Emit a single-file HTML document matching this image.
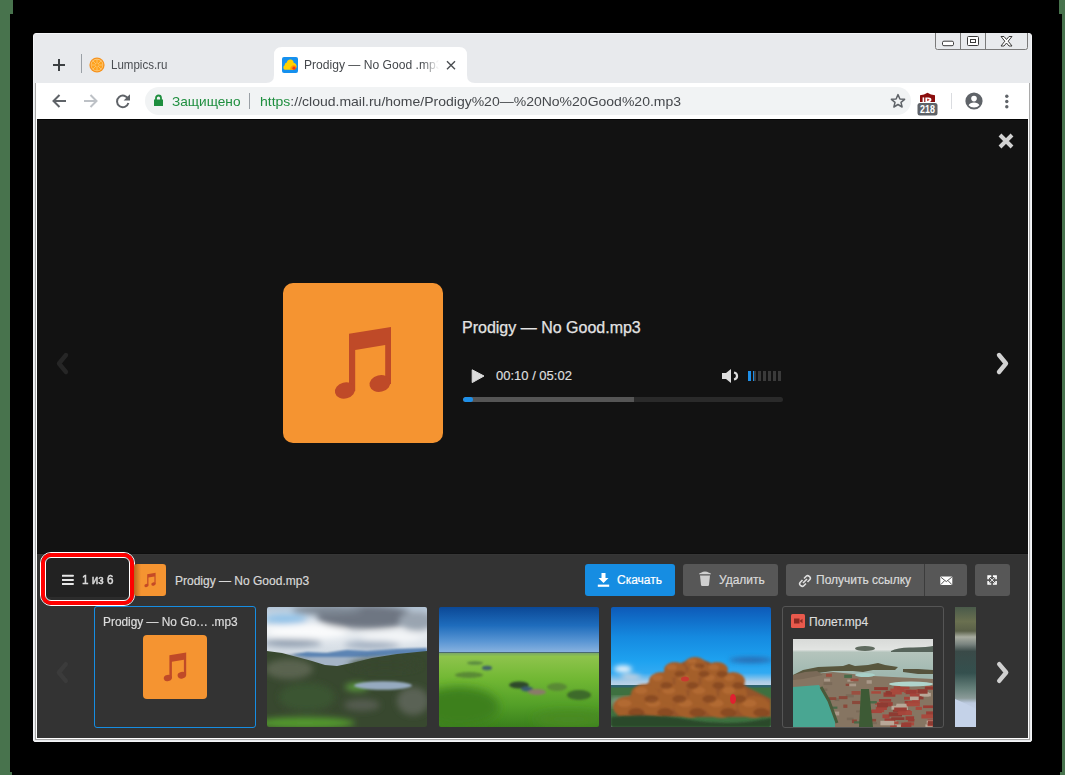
<!DOCTYPE html>
<html><head><meta charset="utf-8">
<style>
*{margin:0;padding:0;box-sizing:border-box}
html,body{width:1065px;height:775px;overflow:hidden;background:#000;font-family:"Liberation Sans",sans-serif}
.a{position:absolute}
.t{position:absolute;white-space:nowrap;font-family:"Liberation Sans",sans-serif}
</style></head><body>
<!-- green edges -->
<div class="a" style="left:0;top:0;width:13px;height:14px;background:#48734d"></div>
<div class="a" style="left:0;top:14px;width:10px;height:761px;background:#48734d"></div>
<div class="a" style="left:1059px;top:0;width:6px;height:14px;background:#48734d"></div>
<div class="a" style="left:1062px;top:14px;width:3px;height:761px;background:#48734d"></div>
<div class="a" style="left:0;top:772px;width:12px;height:3px;background:#48734d"></div>
<div class="a" style="left:1060px;top:772px;width:5px;height:3px;background:#48734d"></div>

<!-- window frame -->
<div class="a" style="left:33px;top:33px;width:999px;height:709px;background:#e8eaed;border:1px solid #f4f5f7;border-radius:3px 3px 2px 2px"></div>
<!-- client border -->
<div class="a" style="left:35px;top:83px;width:995px;height:657px;background:#fff;border:1px solid #a9a9a9;border-top:none"></div>

<!-- window controls -->
<svg class="a" style="left:934px;top:32px" width="96" height="19" viewBox="0 0 96 19">
<path d="M1.5,1 V15.5 Q1.5,17.5 3.5,17.5 H91.5 Q93.5,17.5 93.5,15.5 V1" fill="#e8eaed" stroke="#7a7a7a" stroke-width="1"/>
<line x1="26.5" y1="1" x2="26.5" y2="17.5" stroke="#7a7a7a"/>
<line x1="51.5" y1="1" x2="51.5" y2="17.5" stroke="#7a7a7a"/>
<rect x="8.5" y="9.2" width="11" height="4.5" rx="1.4" fill="#fff" stroke="#3a3a3a" stroke-width="1"/>
<rect x="33.5" y="4.5" width="11" height="9" rx="1" fill="#fff" stroke="#3a3a3a" stroke-width="1"/>
<rect x="36.5" y="7.5" width="5" height="3" fill="#fff" stroke="#3a3a3a" stroke-width="1"/>
<path d="M67,4.5 L70,4.5 L72.5,7.5 L75,4.5 L78,4.5 L74.2,9.2 L78,14 L75,14 L72.5,11 L70,14 L67,14 L70.8,9.2 Z" fill="#fff" stroke="#3a3a3a" stroke-width="1" stroke-linejoin="round"/>
</svg>

<!-- tabstrip -->
<svg class="a" style="left:52px;top:58px" width="14" height="14" viewBox="0 0 14 14"><path d="M7,1 V13 M1,7 H13" stroke="#3c4043" stroke-width="2"/></svg>
<div class="a" style="left:81px;top:54px;width:1px;height:19px;background:#9aa0a6"></div>
<svg class="a" style="left:89px;top:57px" width="16" height="16" viewBox="0 0 16 16">
<circle cx="8" cy="8" r="7.6" fill="#f7931e"/>
<circle cx="8" cy="8" r="6.2" fill="#fcd08a"/>
<circle cx="8" cy="8" r="5.6" fill="#ffa21c"/>
<g stroke="#fcd08a" stroke-width="0.7"><line x1="8" y1="2.4" x2="8" y2="13.6"/><line x1="2.4" y1="8" x2="13.6" y2="8"/><line x1="4" y1="4" x2="12" y2="12"/><line x1="12" y1="4" x2="4" y2="12"/></g>
<circle cx="8" cy="8" r="1.2" fill="#ffa21c"/>
</svg>
<div class="t" style="left:110.8px;top:58.5px;font-size:12.4px;line-height:13px;color:#4a4d52;transform:scaleX(0.93);transform-origin:0 0">Lumpics.ru</div>
<svg class="a" style="left:266px;top:47px" width="210" height="36" viewBox="0 0 210 36">
<path d="M0,36 Q8,36 8,28 V8 Q8,0 16,0 H193 Q201,0 201,8 V28 Q201,36 209,36 Z" fill="#fff"/>
</svg>
<svg class="a" style="left:282px;top:57px" width="16" height="16" viewBox="0 0 16 16">
<rect x="0" y="0" width="16" height="16" rx="2" fill="#1590ee"/>
<path d="M1.6,11.8 Q0.6,9.4 2.6,8.2 Q2.4,5.8 4.8,5.4 Q5.6,2.4 8.6,2.6 Q11.4,2.8 11.6,5.8 Q14.8,6.6 14.6,9.8 Q14.2,12.6 11.6,12.8 H3.2 Q2,12.8 1.6,11.8 Z" fill="#ffd200"/>
<path d="M8.2,12.8 Q8,9.6 10.4,8.4 Q13.2,7.6 14.4,9.6 Q14.4,12.4 11.6,12.8 Z" fill="#ff9800"/>
<circle cx="12" cy="11.2" r="1.6" fill="#f2361a"/>
</svg>
<div class="t" style="left:304px;top:56.5px;width:135px;height:18px;overflow:hidden;font-size:13px;line-height:16px;color:#45484c;-webkit-mask-image:linear-gradient(to right,#000 118px,transparent 135px)"><span style="display:inline-block;transform:scaleX(0.93);transform-origin:0 0">Prodigy — No Good .mp3</span></div>
<svg class="a" style="left:446px;top:60px" width="10" height="10" viewBox="0 0 10 10"><path d="M1,1.3 L9,9.3 M9,1.3 L1,9.3" stroke="#4a4d51" stroke-width="1.4"/></svg>


<!-- toolbar -->
<svg class="a" style="left:51px;top:93px" width="16" height="16" viewBox="0 0 16 16"><path d="M15,8 H3 M8.5,2 L2.5,8 L8.5,14" fill="none" stroke="#5f6368" stroke-width="2"/></svg>
<svg class="a" style="left:83px;top:93px" width="16" height="16" viewBox="0 0 16 16"><path d="M1,8 H13 M7.5,2 L13.5,8 L7.5,14" fill="none" stroke="#bdc1c6" stroke-width="2"/></svg>
<svg class="a" style="left:115px;top:93px" width="16" height="16" viewBox="0 0 16 16"><path d="M13.2,6.2 A5.8,5.8 0 1 0 13.4,10" fill="none" stroke="#5f6368" stroke-width="2"/><path d="M15,1.2 V7.6 H8.6 Z" fill="#5f6368"/></svg>
<div class="a" style="left:145px;top:87px;width:766px;height:28px;border-radius:14px;background:#f1f3f4"></div>
<svg class="a" style="left:153px;top:94px" width="11" height="13" viewBox="0 0 11 13"><path d="M3,6 V4 A2.5,2.5 0 0 1 8,4 V6" fill="none" stroke="#1e8e3e" stroke-width="1.8"/><rect x="1" y="5.5" width="9" height="6.5" fill="#1e8e3e"/></svg>
<div class="t" style="left:171.5px;top:95px;font-size:13px;line-height:14px;color:#1e8e3e;transform:scaleX(1.05);transform-origin:0 0">Защищено</div>
<div class="a" style="left:249px;top:93px;width:1px;height:16px;background:#9aa0a6"></div>
<div class="t" style="left:259.5px;top:95px;font-size:13px;line-height:14px;color:#45484c;transform:scaleX(1.077);transform-origin:0 0"><span style="color:#1e8e3e">https</span>://cloud.mail.ru/home/Prodigy%20—%20No%20Good%20.mp3</div>
<svg class="a" style="left:890px;top:93px" width="16" height="16" viewBox="0 0 16 16"><path d="M8,1.6 L9.9,6 L14.6,6.3 L11,9.3 L12.1,14 L8,11.5 L3.9,14 L5,9.3 L1.4,6.3 L6.1,6 Z" fill="none" stroke="#5f6368" stroke-width="1.5" stroke-linejoin="round"/></svg>
<svg class="a" style="left:917px;top:92px" width="21" height="24" viewBox="0 0 21 24">
<path d="M3,10 V3.2 L7,2.6 L10.5,0.8 L14,2.6 L18,3.2 V10 Z" fill="#8b0d0d"/>
<rect x="5.6" y="5.4" width="1.6" height="4.6" fill="#fff"/>
<path d="M8.4,5.4 H11.4 Q14.4,5.4 14.4,7.7 Q14.4,10 11.4,10 H8.4 Z" fill="#fff"/>
<path d="M10.2,6.4 L12.8,7.8 L10.2,9.2 Z" fill="#b8201a"/>
<rect x="0.5" y="11" width="20" height="12.5" rx="2.5" fill="#5f6368"/>
<text x="10.5" y="21.2" font-family="Liberation Sans" font-size="10.5" font-weight="700" fill="#fff" text-anchor="middle" transform="translate(10.5 0) scale(0.85 1) translate(-10.5 0)">218</text>
</svg>
<div class="a" style="left:951px;top:93px;width:1px;height:16px;background:#dadce0"></div>
<svg class="a" style="left:965px;top:92px" width="18" height="18" viewBox="0 0 18 18"><circle cx="9" cy="9" r="8.6" fill="#5f6368"/><circle cx="9" cy="6.6" r="2.8" fill="#fff"/><path d="M3.6,13.2 Q5,10.6 9,10.6 Q13,10.6 14.4,13.2 Q12.4,15.6 9,15.6 Q5.6,15.6 3.6,13.2 Z" fill="#fff"/></svg>
<svg class="a" style="left:1004px;top:94px" width="6" height="16" viewBox="0 0 6 16"><circle cx="2.8" cy="2.2" r="1.7" fill="#5f6368"/><circle cx="2.8" cy="7.5" r="1.7" fill="#5f6368"/><circle cx="2.8" cy="12.8" r="1.7" fill="#5f6368"/></svg>


<!-- content -->
<div class="a" style="left:37px;top:119px;width:991px;height:619px;background:#121212;border-top:1px solid #050505"></div>
<svg class="a" style="left:996px;top:131px" width="20" height="20" viewBox="0 0 20 20"><path d="M4,4 L16,16 M16,4 L4,16" stroke="#d2d2d2" stroke-width="4"/></svg>
<svg class="a" style="left:52px;top:349px" width="20" height="29" viewBox="0 0 20 29"><path d="M14,6 L7,14.5 L14,23" fill="none" stroke="#262626" stroke-width="4.4" stroke-linecap="round" stroke-linejoin="round"/></svg>
<svg class="a" style="left:993px;top:349px" width="20" height="29" viewBox="0 0 20 29"><path d="M6,6 L13,14.5 L6,23" fill="none" stroke="#d2d2d2" stroke-width="4.4" stroke-linecap="round" stroke-linejoin="round"/></svg>
<svg class="a" style="left:283px;top:283px" width="160" height="160" viewBox="0 0 160 160"><rect width="160" height="160" rx="10" fill="#f59431"/><g fill="#bf4a28"><path d="M66,50.7 L108,44 L108,101 L102.2,101 L102.2,62 L72.2,67 L72.2,108 L66,108 Z"/><ellipse cx="62" cy="107.5" rx="10.2" ry="8" transform="rotate(-14 62 107.5)"/><ellipse cx="97" cy="100.5" rx="10.6" ry="8.3" transform="rotate(-14 97 100.5)"/></g></svg>
<div class="t" style="left:462px;top:320px;font-size:16px;line-height:16px;color:#e3e3e3;-webkit-text-stroke:0.25px #e3e3e3">Prodigy — No Good.mp3</div>
<svg class="a" style="left:470px;top:368px" width="16" height="16" viewBox="0 0 16 16"><path d="M2.2,1.8 L14,8 L2.2,14.6 Z" fill="#dcdcdc" stroke="#dcdcdc" stroke-width="1" stroke-linejoin="round"/></svg>
<div class="t" style="left:496px;top:369px;font-size:13px;line-height:13px;color:#dedede;-webkit-text-stroke:0.2px #dedede">00:10 / 05:02</div>
<svg class="a" style="left:720px;top:367px" width="22" height="18" viewBox="0 0 22 18"><path d="M2,6 H6 L11,2 V16 L6,12 H2 Z" fill="#dcdcdc"/><path d="M14,5.5 A4,3.6 0 0 1 14,12.5" fill="none" stroke="#dcdcdc" stroke-width="2.2"/></svg>
<div class="a" style="left:748px;top:371px;width:3px;height:10px;background:#1e8fe8"></div>
<div class="a" style="left:753px;top:371px;width:1px;height:10px;background:#1e8fe8"></div>
<div class="a" style="left:754px;top:371px;width:2px;height:10px;background:#3a3a3a"></div>
<div class="a" style="left:758px;top:371px;width:3px;height:10px;background:#3a3a3a"></div>
<div class="a" style="left:763px;top:371px;width:3px;height:10px;background:#3a3a3a"></div>
<div class="a" style="left:768px;top:371px;width:3px;height:10px;background:#3a3a3a"></div>
<div class="a" style="left:773px;top:371px;width:3px;height:10px;background:#3a3a3a"></div>
<div class="a" style="left:778px;top:371px;width:3px;height:10px;background:#3a3a3a"></div>
<div class="a" style="left:463px;top:397px;width:320px;height:5px;border-radius:2.5px;background:#2a2a2a;overflow:hidden"><div class="a" style="left:0;top:0;width:171px;height:5px;background:#555"></div><div class="a" style="left:0;top:0;width:10px;height:5px;border-radius:2.5px;background:#1e8fe8"></div></div>


<!-- bottom panel -->
<div class="a" style="left:37px;top:553px;width:991px;height:1px;background:#0e0e0e"></div>
<div class="a" style="left:37px;top:554px;width:991px;height:184px;background:#333;border-top:1px solid #363636"></div>
<div class="a" style="left:46px;top:558px;width:83px;height:43px;border-radius:3px;background:#222;border-bottom:4px solid #2c2c2c"></div>
<div class="a" style="left:40px;top:552px;width:95px;height:54px;border-radius:11px;border:1.5px solid #fff"></div>
<div class="a" style="left:41px;top:553px;width:93px;height:52px;border-radius:10px;border:4px solid #f00"></div>
<div class="a" style="left:45px;top:557px;width:85px;height:44px;border-radius:6px;border:1.5px solid #fff"></div>
<svg class="a" style="left:62px;top:574px" width="12" height="12" viewBox="0 0 12 12"><path d="M0.5,1.8 H11 M0.5,5.9 H11 M0.5,10 H11" stroke="#e6e6e6" stroke-width="2" stroke-linecap="round"/></svg>
<div class="t" style="left:81.5px;top:572.5px;font-size:13px;line-height:13px;font-weight:400;color:#dadada;-webkit-text-stroke:0.5px #dadada;transform:scaleX(0.9);transform-origin:0 0">1 из 6</div>
<svg class="a" style="left:134px;top:564px" width="32" height="32" viewBox="0 0 160 160"><rect width="160" height="160" rx="16" fill="#f59431"/><g fill="#c54a26"><path d="M66,50.7 L108,44 L108,101 L102.2,101 L102.2,62 L72.2,67 L72.2,108 L66,108 Z"/><ellipse cx="62" cy="107.5" rx="10.2" ry="8" transform="rotate(-14 62 107.5)"/><ellipse cx="97" cy="100.5" rx="10.6" ry="8.3" transform="rotate(-14 97 100.5)"/></g></svg>
<div class="a" style="left:134px;top:564px;width:7px;height:32px;background:linear-gradient(to right,rgba(60,20,0,0.35),rgba(60,20,0,0))"></div>
<div class="t" style="left:175px;top:575px;font-size:12px;line-height:12px;color:#d8d8d8;-webkit-text-stroke:0.2px #d8d8d8">Prodigy — No Good.mp3</div>

<div class="a" style="left:585px;top:564px;width:90px;height:32px;border-radius:3px;background:#168de2"></div>
<svg class="a" style="left:597px;top:572px" width="13" height="15" viewBox="0 0 13 15"><path d="M4.5,1 H8.5 V6 H11.5 L6.5,11 L1.5,6 H4.5 Z" fill="#fff"/><rect x="0.8" y="12.6" width="11.4" height="2.2" fill="#fff"/></svg>
<div class="t" style="left:617px;top:574px;font-size:12px;line-height:12px;color:#fff;-webkit-text-stroke:0.2px #fff">Скачать</div>
<div class="a" style="left:683px;top:564px;width:95px;height:32px;border-radius:3px;background:#575757"></div>
<svg class="a" style="left:698px;top:571px" width="14" height="16" viewBox="0 0 14 16"><path d="M1,3.2 Q1,2 3,1.8 Q5,0.6 7,0.6 Q9,0.6 11,1.8 Q13,2 13,3.2 Z" fill="#d0d0d0"/><path d="M2,4.5 H12 L11,14 Q10.8,15 9.8,15 H4.2 Q3.2,15 3,14 Z" fill="#d0d0d0"/></svg>
<div class="t" style="left:719px;top:574px;font-size:12px;line-height:12px;color:#dadada;-webkit-text-stroke:0.2px #dadada">Удалить</div>
<div class="a" style="left:786px;top:564px;width:138px;height:32px;border-radius:3px 0 0 3px;background:#575757"></div>
<div class="a" style="left:924px;top:564px;width:1px;height:32px;background:#3c3c3c"></div>
<div class="a" style="left:925px;top:564px;width:42px;height:32px;border-radius:0 3px 3px 0;background:#575757"></div>
<svg class="a" style="left:798px;top:574px" width="14" height="14" viewBox="0 0 14 14"><g fill="none" stroke="#e0e0e0" stroke-width="1.6"><path d="M6,4.5 L8.2,2.3 Q9.6,0.9 11.2,2.3 L11.7,2.8 Q13.1,4.4 11.7,5.8 L9.5,8"/><path d="M8,9.5 L5.8,11.7 Q4.4,13.1 2.8,11.7 L2.3,11.2 Q0.9,9.6 2.3,8.2 L4.5,6"/><path d="M5,9 L9,5"/></g></svg>
<div class="t" style="left:816px;top:574px;font-size:12px;line-height:12px;color:#dadada;-webkit-text-stroke:0.2px #dadada">Получить ссылку</div>
<svg class="a" style="left:940px;top:576px" width="13" height="10" viewBox="0 0 13 10"><rect x="0.3" y="0.5" width="12" height="8.6" rx="0.8" fill="#fff"/><path d="M0.8,1.2 L6.3,5.6 L11.8,1.2 M0.8,8.6 L4.6,4.6 M11.8,8.6 L8,4.6" fill="none" stroke="#575757" stroke-width="1"/></svg>
<div class="a" style="left:975px;top:564px;width:35px;height:32px;border-radius:3px;background:#575757"></div>
<svg class="a" style="left:987.3px;top:575.3px" width="10.2" height="10.2" viewBox="0 0 11 11"><g fill="none" stroke="#fff"><path d="M1.2,4.6 V1.2 H4.6 M6.4,1.2 H9.8 V4.6 M9.8,6.4 V9.8 H6.4 M4.6,9.8 H1.2 V6.4" stroke-width="1.7"/><path d="M1.5,1.5 L9.5,9.5 M9.5,1.5 L1.5,9.5" stroke-width="0.9"/></g></svg>

<svg class="a" style="left:52px;top:658px" width="20" height="29" viewBox="0 0 20 29"><path d="M13.8,6.2 L6.8,14.5 L13.8,22.8" fill="none" stroke="#3b3b3b" stroke-width="4.4" stroke-linecap="round" stroke-linejoin="round"/></svg>
<svg class="a" style="left:993px;top:658px" width="20" height="29" viewBox="0 0 20 29"><path d="M6.2,6.2 L13.2,14.5 L6.2,22.8" fill="none" stroke="#d0d0d0" stroke-width="4.4" stroke-linecap="round" stroke-linejoin="round"/></svg>

<div class="a" style="left:94px;top:606px;width:162px;height:122px;border:1px solid #168de2;border-radius:3px"></div>
<div class="t" style="left:103px;top:616px;font-size:12px;line-height:12px;color:#dcdcdc;-webkit-text-stroke:0.2px #dcdcdc;transform:scaleX(0.99);transform-origin:0 0">Prodigy — No Go… .mp3</div>
<svg class="a" style="left:143px;top:635px" width="64" height="64" viewBox="0 0 160 160"><rect width="160" height="160" rx="10" fill="#f59431"/><g fill="#bf4a28"><path d="M66,50.7 L108,44 L108,101 L102.2,101 L102.2,62 L72.2,67 L72.2,108 L66,108 Z"/><ellipse cx="62" cy="107.5" rx="10.2" ry="8" transform="rotate(-14 62 107.5)"/><ellipse cx="97" cy="100.5" rx="10.6" ry="8.3" transform="rotate(-14 97 100.5)"/></g></svg>

<svg class="a" style="left:267px;top:607px;border-radius:2px" width="160" height="120" viewBox="0 0 160 120">
<defs><linearGradient id="g2s" x1="0" y1="0" x2="0" y2="1"><stop offset="0" stop-color="#b4c6d8"/><stop offset="0.3" stop-color="#eef1f4"/><stop offset="0.65" stop-color="#d4dce4"/><stop offset="1" stop-color="#9ab0c8"/></linearGradient>
<filter id="bl2" x="-20%" y="-20%" width="140%" height="140%"><feGaussianBlur stdDeviation="3"/></filter><filter id="bl1" x="-20%" y="-20%" width="140%" height="140%"><feGaussianBlur stdDeviation="1"/></filter></defs>
<rect width="160" height="70" fill="url(#g2s)"/>
<g filter="url(#bl2)">
<ellipse cx="18" cy="12" rx="22" ry="5" fill="#92c2e8"/>
<ellipse cx="100" cy="10" rx="50" ry="12" fill="#6e7682"/>
<ellipse cx="60" cy="3" rx="35" ry="5" fill="#7e8894"/>
<ellipse cx="150" cy="14" rx="18" ry="10" fill="#9aa4b0"/>
<ellipse cx="40" cy="25" rx="40" ry="7" fill="#fafbfc"/>
<ellipse cx="125" cy="30" rx="30" ry="5" fill="#f4f6f8"/>
<ellipse cx="25" cy="36" rx="30" ry="4" fill="#8e9cae"/>
<ellipse cx="105" cy="38" rx="28" ry="4" fill="#a0aec0"/>
</g>
<path d="M10,50 L30,46 L55,47 L75,44 L100,45 L130,43 L160,42 V70 H10 Z" fill="#a4b4c6" filter="url(#bl1)"/><path d="M25,48 L40,45 L60,46 L80,43 L100,44 L130,42 L160,41 V47 L130,48 L100,50 L70,50 L40,50 Z" fill="#5c84b4" filter="url(#bl1)"/>
<path d="M0,44 L15,46 L30,50 L45,54 L58,58 L70,59 L85,56 L105,51 L130,47 L150,45 L160,44 V120 H0 Z" fill="#38482f"/>
<g filter="url(#bl2)">
<ellipse cx="22" cy="62" rx="24" ry="10" fill="#5a6450"/>
<ellipse cx="40" cy="90" rx="28" ry="14" fill="#3a5430"/>
<ellipse cx="118" cy="58" rx="36" ry="6" fill="#38472f"/>
<ellipse cx="146" cy="94" rx="16" ry="14" fill="#5a6254"/>
<ellipse cx="95" cy="98" rx="18" ry="6" fill="#545c50"/>
<ellipse cx="90" cy="80" rx="12" ry="4" fill="#5a9a3c"/>
<ellipse cx="38" cy="116" rx="50" ry="6" fill="#52982e"/>
</g>
<ellipse cx="116" cy="78.5" rx="29" ry="4.2" fill="#96aac0" filter="url(#bl1)"/>
</svg>
<svg class="a" style="left:439px;top:607px;border-radius:2px" width="160" height="120" viewBox="0 0 160 120">
<defs><linearGradient id="g3s" x1="0" y1="0" x2="0" y2="1"><stop offset="0" stop-color="#0b4896"/><stop offset="0.4" stop-color="#1e6cbc"/><stop offset="0.75" stop-color="#5a96d4"/><stop offset="1" stop-color="#8cb4e0"/></linearGradient>
<linearGradient id="g3g" x1="0" y1="0" x2="0" y2="1"><stop offset="0" stop-color="#74a070"/><stop offset="0.06" stop-color="#8ec44c"/><stop offset="0.35" stop-color="#72b834"/><stop offset="0.7" stop-color="#54a028"/><stop offset="1" stop-color="#3a801c"/></linearGradient>
<filter id="bl3" x="-30%" y="-30%" width="160%" height="160%"><feGaussianBlur stdDeviation="1.3"/></filter><filter id="bl3b" x="-30%" y="-30%" width="160%" height="160%"><feGaussianBlur stdDeviation="5"/></filter></defs>
<rect width="160" height="46" fill="url(#g3s)"/>
<rect y="45" width="160" height="75" fill="url(#g3g)"/>
<rect y="45" width="160" height="1" fill="#4a6a70"/>
<g filter="url(#bl3b)">
<ellipse cx="20" cy="100" rx="40" ry="20" fill="#3e801e"/>
<ellipse cx="130" cy="112" rx="35" ry="8" fill="#4a8a22"/>
</g>
<g filter="url(#bl3)">
<ellipse cx="48" cy="61" rx="5" ry="2.2" fill="#40606a"/>
<ellipse cx="36" cy="56" rx="8" ry="1.8" fill="#5a8a40"/>
<ellipse cx="30" cy="68" rx="14" ry="3" fill="#5a8a36"/>
<ellipse cx="80" cy="78" rx="10" ry="3.5" fill="#2e4a2a"/>
<ellipse cx="88" cy="82" rx="6" ry="2.5" fill="#3a5a70"/>
<ellipse cx="98" cy="85" rx="9" ry="3" fill="#8a7a6a"/>
<ellipse cx="140" cy="88" rx="12" ry="5" fill="#3e6a2a"/>
<ellipse cx="118" cy="80" rx="10" ry="4" fill="#5a8a34"/>
</g>
</svg>
<svg class="a" style="left:611px;top:607px;border-radius:2px" width="160" height="120" viewBox="0 0 160 120">
<defs><linearGradient id="g4s" x1="0" y1="0" x2="0" y2="1"><stop offset="0" stop-color="#0d5ab8"/><stop offset="0.25" stop-color="#158ae0"/><stop offset="0.45" stop-color="#1ea2f0"/><stop offset="0.55" stop-color="#32aaf2"/><stop offset="0.62" stop-color="#a8cce8"/><stop offset="0.66" stop-color="#c4d8ea"/></linearGradient>
<filter id="bl4" x="-20%" y="-20%" width="140%" height="140%"><feGaussianBlur stdDeviation="0.9"/></filter><filter id="bl4b" x="-20%" y="-20%" width="140%" height="140%"><feGaussianBlur stdDeviation="2.5"/></filter></defs>
<rect width="160" height="120" fill="url(#g4s)"/>
<g filter="url(#bl4b)"><ellipse cx="12" cy="62" rx="9" ry="3.5" fill="#eef4fa"/><ellipse cx="20" cy="70" rx="10" ry="3" fill="#c0d0e0"/><ellipse cx="140" cy="53" rx="22" ry="3" fill="#2a6ab0"/></g>
<rect y="78" width="160" height="42" fill="#3e7040"/>
<rect y="78" width="160" height="2.5" fill="#2e6470"/>
<rect y="90" width="50" height="10" fill="#7a9a80" filter="url(#bl4b)"/>
<g filter="url(#bl4)">
<path d="M6,110 L10,96 L24,84 L40,74 L54,64 L70,56 L84,50 L98,55 L112,62 L126,72 L136,80 L152,88 L160,92 V110 Z" fill="#94542a"/>
<ellipse cx="18" cy="100" rx="16" ry="11" fill="#a45e2c"/><ellipse cx="47" cy="100" rx="16" ry="11" fill="#a45e2c"/><ellipse cx="79" cy="100" rx="16" ry="11" fill="#a45e2c"/><ellipse cx="110" cy="100" rx="16" ry="11" fill="#a45e2c"/><ellipse cx="143" cy="100" rx="16" ry="11" fill="#a45e2c"/><ellipse cx="34" cy="87" rx="14" ry="10" fill="#a45e2c"/><ellipse cx="62" cy="87" rx="14" ry="10" fill="#a45e2c"/><ellipse cx="92" cy="87" rx="14" ry="10" fill="#a45e2c"/><ellipse cx="122" cy="87" rx="14" ry="10" fill="#a45e2c"/><ellipse cx="50" cy="74" rx="12" ry="9" fill="#a45e2c"/><ellipse cx="76" cy="74" rx="12" ry="9" fill="#a45e2c"/><ellipse cx="102" cy="74" rx="12" ry="9" fill="#a45e2c"/><ellipse cx="122" cy="74" rx="12" ry="9" fill="#a45e2c"/><ellipse cx="64" cy="63" rx="11" ry="8" fill="#a45e2c"/><ellipse cx="88" cy="63" rx="11" ry="8" fill="#a45e2c"/><ellipse cx="106" cy="63" rx="11" ry="8" fill="#a45e2c"/><ellipse cx="84" cy="56" rx="10" ry="6" fill="#a45e2c"/><ellipse cx="25.2" cy="105.5" rx="8.0" ry="4.4" fill="#7a4020" opacity="0.6"/><ellipse cx="13.2" cy="96.2" rx="7.2" ry="3.8" fill="#bc7438" opacity="0.6"/><ellipse cx="54.2" cy="105.5" rx="8.0" ry="4.4" fill="#7a4020" opacity="0.6"/><ellipse cx="42.2" cy="96.2" rx="7.2" ry="3.8" fill="#bc7438" opacity="0.6"/><ellipse cx="86.2" cy="105.5" rx="8.0" ry="4.4" fill="#7a4020" opacity="0.6"/><ellipse cx="74.2" cy="96.2" rx="7.2" ry="3.8" fill="#bc7438" opacity="0.6"/><ellipse cx="117.2" cy="105.5" rx="8.0" ry="4.4" fill="#7a4020" opacity="0.6"/><ellipse cx="105.2" cy="96.2" rx="7.2" ry="3.8" fill="#bc7438" opacity="0.6"/><ellipse cx="150.2" cy="105.5" rx="8.0" ry="4.4" fill="#7a4020" opacity="0.6"/><ellipse cx="138.2" cy="96.2" rx="7.2" ry="3.8" fill="#bc7438" opacity="0.6"/><ellipse cx="40.3" cy="92.0" rx="7.0" ry="4.0" fill="#7a4020" opacity="0.6"/><ellipse cx="29.8" cy="83.5" rx="6.3" ry="3.5" fill="#bc7438" opacity="0.6"/><ellipse cx="68.3" cy="92.0" rx="7.0" ry="4.0" fill="#7a4020" opacity="0.6"/><ellipse cx="57.8" cy="83.5" rx="6.3" ry="3.5" fill="#bc7438" opacity="0.6"/><ellipse cx="98.3" cy="92.0" rx="7.0" ry="4.0" fill="#7a4020" opacity="0.6"/><ellipse cx="87.8" cy="83.5" rx="6.3" ry="3.5" fill="#bc7438" opacity="0.6"/><ellipse cx="128.3" cy="92.0" rx="7.0" ry="4.0" fill="#7a4020" opacity="0.6"/><ellipse cx="117.8" cy="83.5" rx="6.3" ry="3.5" fill="#bc7438" opacity="0.6"/><ellipse cx="55.4" cy="78.5" rx="6.0" ry="3.6" fill="#7a4020" opacity="0.6"/><ellipse cx="46.4" cy="70.8" rx="5.4" ry="3.1" fill="#bc7438" opacity="0.6"/><ellipse cx="81.4" cy="78.5" rx="6.0" ry="3.6" fill="#7a4020" opacity="0.6"/><ellipse cx="72.4" cy="70.8" rx="5.4" ry="3.1" fill="#bc7438" opacity="0.6"/><ellipse cx="107.4" cy="78.5" rx="6.0" ry="3.6" fill="#7a4020" opacity="0.6"/><ellipse cx="98.4" cy="70.8" rx="5.4" ry="3.1" fill="#bc7438" opacity="0.6"/><ellipse cx="127.4" cy="78.5" rx="6.0" ry="3.6" fill="#7a4020" opacity="0.6"/><ellipse cx="118.4" cy="70.8" rx="5.4" ry="3.1" fill="#bc7438" opacity="0.6"/><ellipse cx="69.0" cy="67.0" rx="5.5" ry="3.2" fill="#7a4020" opacity="0.6"/><ellipse cx="60.7" cy="60.2" rx="5.0" ry="2.8" fill="#bc7438" opacity="0.6"/><ellipse cx="93.0" cy="67.0" rx="5.5" ry="3.2" fill="#7a4020" opacity="0.6"/><ellipse cx="84.7" cy="60.2" rx="5.0" ry="2.8" fill="#bc7438" opacity="0.6"/><ellipse cx="111.0" cy="67.0" rx="5.5" ry="3.2" fill="#7a4020" opacity="0.6"/><ellipse cx="102.7" cy="60.2" rx="5.0" ry="2.8" fill="#bc7438" opacity="0.6"/><ellipse cx="88.5" cy="59.0" rx="5.0" ry="2.4" fill="#7a4020" opacity="0.6"/><ellipse cx="81.0" cy="53.9" rx="4.5" ry="2.1" fill="#bc7438" opacity="0.6"/></g>
<path d="M0,110 Q40,106 80,113 T160,111 V120 H0 Z" fill="#2c4a2c" filter="url(#bl4)"/>
<ellipse cx="122" cy="92" rx="3" ry="5" fill="#e02030"/>
<ellipse cx="74" cy="72" rx="4" ry="2.5" fill="#c83a30"/>
</svg>

<div class="a" style="left:782px;top:606px;width:162px;height:122px;border:1px solid #555;border-radius:3px"></div>
<svg class="a" style="left:791px;top:614px" width="14" height="14" viewBox="0 0 14 14"><rect width="14" height="14" rx="1.5" fill="#e8594c"/><rect x="3" y="4.5" width="5.5" height="5" fill="#8a2a22"/><path d="M8.5,7 L11.5,4.8 V9.2 Z" fill="#8a2a22"/></svg>
<div class="t" style="left:809px;top:616px;font-size:12px;line-height:12px;color:#dcdcdc;-webkit-text-stroke:0.2px #dcdcdc">Полет.mp4</div>
<svg class="a" style="left:793px;top:639px" width="140" height="88" viewBox="0 0 140 88">
<defs><linearGradient id="g5s" x1="0" y1="0" x2="0" y2="1"><stop offset="0" stop-color="#d8dad8"/><stop offset="0.12" stop-color="#e2e4e2"/><stop offset="0.15" stop-color="#b4c4bc"/><stop offset="0.4" stop-color="#a0b8b0"/></linearGradient>
<filter id="bl5" x="-10%" y="-10%" width="120%" height="120%"><feGaussianBlur stdDeviation="0.7"/></filter></defs>
<rect width="140" height="88" fill="url(#g5s)"/>
<g filter="url(#bl5)">
<ellipse cx="72" cy="9.5" rx="10" ry="2.5" fill="#5e6a5e"/>
<path d="M98,12 Q105,8 120,8.5 Q135,8 140,7 V13 H98 Z" fill="#56645a"/>
<path d="M0,36 L10,31 L25,28 L50,27 L56,25 L62,27 L75,26 L85,24 L92,26 L105,28 L102,31 L80,31 L70,33 L60,32 L40,32 L25,34 L10,37 Z" fill="#58563e"/>
<path d="M110,30 L125,30 L140,31 V35 L125,35 L110,33 Z" fill="#56523e"/>
<path d="M0,37 L40,33 L80,37 L140,40 V88 H0 Z" fill="#867562"/>
<ellipse cx="72" cy="36" rx="10" ry="2" fill="#a8d0c8"/>
<ellipse cx="118" cy="45" rx="22" ry="2.5" fill="#b0d4cc"/>
<path d="M0,36 L12,33 L24,32 L30,36 L10,40 L0,41 Z" fill="#7a6a58"/>
</g>
<g filter="url(#bl5)"><rect x="101.5" y="68.7" width="13.4" height="3.4" fill="#b8a898"/><rect x="125.4" y="53.9" width="12.4" height="3.5" fill="#b8a898"/><rect x="123.8" y="50.4" width="8.4" height="2.7" fill="#a5453a"/><rect x="111.7" y="61.9" width="9.6" height="4.0" fill="#9a3e34"/><rect x="114.9" y="80.0" width="6.5" height="2.6" fill="#9a3e34"/><rect x="112.5" y="77.3" width="8.6" height="3.7" fill="#9a3e34"/><rect x="107.1" y="71.7" width="10.0" height="3.8" fill="#8e3a30"/><rect x="114.8" y="62.1" width="10.4" height="4.4" fill="#a5453a"/><rect x="119.1" y="59.1" width="7.8" height="3.1" fill="#a5453a"/><rect x="111.2" y="50.8" width="6.9" height="3.1" fill="#a5453a"/><rect x="134.6" y="80.4" width="6.0" height="2.9" fill="#a5453a"/><rect x="104.7" y="85.9" width="9.2" height="2.6" fill="#9a3e34"/><rect x="123.8" y="57.2" width="6.7" height="3.2" fill="#8e3a30"/><rect x="122.0" y="51.4" width="8.0" height="2.7" fill="#a5453a"/><rect x="103.2" y="66.0" width="11.5" height="2.9" fill="#b8a898"/><rect x="89.5" y="75.4" width="7.0" height="3.8" fill="#a5453a"/><rect x="101.9" y="85.5" width="6.0" height="4.2" fill="#b8a898"/><rect x="95.8" y="81.8" width="7.7" height="3.3" fill="#b8a898"/><rect x="112.3" y="50.6" width="13.9" height="2.9" fill="#a84a3c"/><rect x="76.2" y="70.8" width="12.6" height="3.3" fill="#a5453a"/><rect x="83.3" y="69.5" width="7.9" height="3.7" fill="#a84a3c"/><rect x="112.7" y="51.0" width="10.7" height="4.2" fill="#9a3e34"/><rect x="128.6" y="53.2" width="7.2" height="4.3" fill="#b8a898"/><rect x="90.5" y="53.4" width="11.9" height="4.4" fill="#9a3e34"/><rect x="116.9" y="62.2" width="9.9" height="2.7" fill="#a5453a"/><rect x="81.2" y="48.1" width="13.7" height="3.0" fill="#8e3a30"/><rect x="91.5" y="79.4" width="10.8" height="3.1" fill="#9a3e34"/><rect x="132.4" y="85.4" width="7.0" height="3.5" fill="#b8a898"/><rect x="111.0" y="57.8" width="13.3" height="2.9" fill="#a5453a"/><rect x="82.0" y="63.2" width="8.0" height="2.6" fill="#a84a3c"/><rect x="99.9" y="69.3" width="7.1" height="3.2" fill="#8e3a30"/><rect x="133.1" y="72.4" width="11.5" height="3.7" fill="#9a3e34"/><rect x="111.3" y="83.3" width="9.8" height="3.2" fill="#a84a3c"/><rect x="132.3" y="47.1" width="11.1" height="3.5" fill="#a84a3c"/><rect x="97.2" y="86.2" width="6.6" height="3.6" fill="#a5453a"/><rect x="128.4" y="75.4" width="11.6" height="4.1" fill="#a84a3c"/><rect x="95.8" y="73.3" width="13.2" height="4.2" fill="#8e3a30"/><rect x="131.8" y="47.9" width="10.0" height="2.5" fill="#8e3a30"/><rect x="100.7" y="47.2" width="6.6" height="2.7" fill="#a5453a"/><rect x="133.7" y="81.6" width="11.8" height="3.3" fill="#b8a898"/><rect x="103.4" y="64.7" width="10.3" height="3.5" fill="#b8a898"/><rect x="78.8" y="70.6" width="9.8" height="3.0" fill="#a5453a"/><rect x="104.2" y="71.1" width="13.4" height="3.0" fill="#a5453a"/><rect x="97.9" y="52.0" width="10.9" height="3.5" fill="#a84a3c"/><rect x="113.7" y="64.1" width="13.1" height="3.2" fill="#a84a3c"/><rect x="87.3" y="63.1" width="12.4" height="4.3" fill="#9a3e34"/><rect x="100.0" y="69.9" width="8.5" height="2.8" fill="#8e3a30"/><rect x="99.2" y="82.5" width="6.3" height="2.6" fill="#a84a3c"/><rect x="124.8" y="50.3" width="9.8" height="4.4" fill="#8e3a30"/><rect x="98.5" y="66.8" width="11.4" height="3.9" fill="#b8a898"/><rect x="105.1" y="48.9" width="6.3" height="4.2" fill="#a5453a"/><rect x="116.9" y="57.3" width="8.8" height="3.8" fill="#b8a898"/><rect x="78.3" y="52.2" width="9.6" height="2.5" fill="#a84a3c"/><rect x="92.6" y="51.8" width="6.4" height="3.8" fill="#8e3a30"/><rect x="82.8" y="67.8" width="11.1" height="3.2" fill="#a5453a"/><rect x="116.8" y="54.5" width="9.8" height="2.9" fill="#a5453a"/><rect x="122.6" y="67.9" width="6.3" height="3.0" fill="#a84a3c"/><rect x="108.3" y="83.6" width="10.0" height="4.5" fill="#9a3e34"/><rect x="98.2" y="78.3" width="13.2" height="2.7" fill="#8e3a30"/><rect x="84.0" y="64.0" width="11.0" height="4.3" fill="#8e3a30"/><rect x="108.9" y="72.0" width="10.0" height="4.1" fill="#a84a3c"/><rect x="105.1" y="72.1" width="7.6" height="3.9" fill="#a5453a"/><rect x="87.4" y="81.8" width="13.8" height="4.5" fill="#b8a898"/><rect x="134.6" y="83.3" width="8.1" height="3.9" fill="#a5453a"/><rect x="97.4" y="49.5" width="9.5" height="3.6" fill="#a84a3c"/><rect x="104.0" y="47.8" width="12.5" height="2.6" fill="#a5453a"/><rect x="85.9" y="60.0" width="12.3" height="2.8" fill="#9a3e34"/><rect x="134.9" y="82.1" width="10.1" height="3.9" fill="#8e3a30"/><rect x="130.1" y="66.4" width="13.6" height="2.7" fill="#9a3e34"/><rect x="101.2" y="68.5" width="12.6" height="3.6" fill="#9a3e34"/><rect x="53.8" y="78.6" width="6.8" height="2.6" fill="#7a6a58"/><rect x="76.1" y="79.9" width="7.0" height="2.6" fill="#8a4a3a"/><rect x="76.9" y="62.1" width="6.9" height="2.4" fill="#4a6a48"/><rect x="33.0" y="34.7" width="5.9" height="3.1" fill="#9a5040"/><rect x="52.8" y="55.3" width="8.0" height="3.1" fill="#7a6a58"/><rect x="30.5" y="43.2" width="8.7" height="2.9" fill="#7a6a58"/><rect x="41.7" y="59.2" width="4.6" height="2.9" fill="#7a6a58"/><rect x="54.3" y="40.6" width="6.1" height="2.1" fill="#a89888"/><rect x="34.7" y="75.3" width="4.1" height="2.4" fill="#8a4a3a"/><rect x="26.8" y="49.5" width="7.6" height="2.5" fill="#7a6a58"/><rect x="33.1" y="72.5" width="4.6" height="3.0" fill="#a89888"/><rect x="63.1" y="71.4" width="8.4" height="2.0" fill="#7a6a58"/><rect x="69.6" y="66.2" width="6.7" height="3.7" fill="#4a6a48"/><rect x="59.1" y="61.9" width="8.3" height="3.2" fill="#8a4a3a"/><rect x="38.1" y="72.6" width="8.1" height="3.8" fill="#a89888"/><rect x="58.9" y="80.5" width="5.0" height="3.6" fill="#8a4a3a"/><rect x="73.6" y="41.2" width="5.2" height="3.5" fill="#a89888"/><rect x="45.8" y="57.1" width="8.7" height="3.1" fill="#8a4a3a"/><rect x="36.4" y="67.6" width="8.0" height="2.2" fill="#4a6a48"/><rect x="61.1" y="82.3" width="8.8" height="2.2" fill="#4a6a48"/><rect x="58.5" y="52.0" width="9.0" height="3.7" fill="#9a5040"/><rect x="51.2" y="35.7" width="7.8" height="3.2" fill="#4a6a48"/><rect x="52.7" y="44.7" width="4.6" height="2.3" fill="#8a4a3a"/><rect x="79.3" y="83.1" width="4.5" height="2.1" fill="#7a6a58"/><rect x="31.1" y="39.6" width="6.0" height="2.9" fill="#a89888"/><rect x="50.3" y="65.5" width="4.1" height="3.4" fill="#8a4a3a"/><rect x="35.6" y="58.2" width="7.7" height="2.8" fill="#8a4a3a"/><rect x="57.5" y="39.6" width="8.0" height="2.6" fill="#9a5040"/><rect x="67.5" y="71.0" width="8.3" height="3.3" fill="#7a6a58"/><rect x="56.2" y="44.6" width="6.9" height="2.7" fill="#a89888"/>
<path d="M68,50 L76,50 L80,88 L66,88 Z" fill="#3e5a34"/>
<path d="M0,48 L26,46 L34,60 L42,80 L42,88 H0 Z" fill="#4aa692"/>
<path d="M28,48 L36,62 L44,84" stroke="#4a5a3a" stroke-width="3" fill="none"/>
</g>
</svg>
<svg class="a" style="left:955px;top:607px" width="21" height="120" viewBox="0 0 21 120">
<defs><linearGradient id="g6" x1="0" y1="0" x2="0" y2="1"><stop offset="0" stop-color="#4a5a4a"/><stop offset="0.12" stop-color="#6a7050"/><stop offset="0.2" stop-color="#5a6048"/><stop offset="0.25" stop-color="#a8aca0"/><stop offset="0.31" stop-color="#7a8480"/><stop offset="0.37" stop-color="#3a4a48"/><stop offset="0.55" stop-color="#34504e"/><stop offset="0.68" stop-color="#66807a"/><stop offset="0.76" stop-color="#8a9a98"/><stop offset="0.8" stop-color="#bccae0"/><stop offset="1" stop-color="#d2ddef"/></linearGradient></defs>
<rect width="21" height="120" fill="url(#g6)"/>
<path d="M0,92 Q10,96 21,102 V120 H0 Z" fill="#c4d2e8"/>
</svg>


</body></html>
